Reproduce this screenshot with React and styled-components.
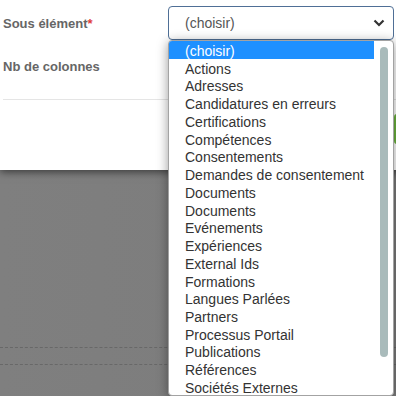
import React from "react";
import styled, { createGlobalStyle } from "styled-components";

const Global = createGlobalStyle`
  html, body { margin: 0; padding: 0; }
  body {
    overflow: hidden;
    background: #7d7d7d;
    font-family: "Liberation Sans", Arial, sans-serif;
  }
`;

const Page = styled.div`
  position: relative;
  width: 396px;
  height: 396px;
  overflow: hidden;
  background: linear-gradient(to right, #7f7f7f, #7b7b7b);
`;

const Modal = styled.div`
  width: calc(100% + 62px);
  background: #fff;
  box-shadow: 0 2px 8px rgba(0, 0, 0, 0.55);
  position: relative;
  z-index: 1;
`;

const Body = styled.div`
  padding: 6px 0 0 3px;
  display: flex;
  flex-direction: column;
  gap: 9px;
`;

const FieldRow = styled.div`
  display: flex;
  align-items: center;
  height: 34px;
`;

const Label = styled.label`
  width: 165px;
  flex: none;
  font-size: 13px;
  font-weight: bold;
  color: #666;
`;

const Required = styled.span`
  color: #e03b3b;
`;

const SelectBox = styled.div`
  box-sizing: border-box;
  width: 226px;
  height: 34px;
  border: 1px solid #4f6f96;
  border-radius: 4px;
  display: flex;
  align-items: center;
  justify-content: space-between;
  padding: 0 8px 0 16px;
  font-size: 14px;
  color: #555;
  background: #fff;
`;

const Divider = styled.hr`
  margin: 16px 0 0 3px;
  border: none;
  border-top: 1px solid #e5e5e5;
`;

const Footer = styled.div`
  display: flex;
  justify-content: flex-end;
  padding: 14px 0 26px;
`;

const GreenButton = styled.button`
  width: 64px;
  height: 30px;
  border: none;
  background: #6cb33e;
  border-radius: 3px;
`;

const Backdrop = styled.div`
  display: flex;
  flex-direction: column;
  gap: 16px;
  padding-top: 177px;
`;

const DashedLine = styled.div`
  border-top: 1px dashed #686868;
`;

const Dropdown = styled.div`
  position: absolute;
  left: 168px;
  top: 40px;
  width: 226px;
  height: 356px;
  box-sizing: border-box;
  border: 1px solid #a3a3a3;
  border-radius: 4px;
  background: #fff;
  box-shadow: 0 2px 12px rgba(0, 0, 0, 0.4);
  display: flex;
  overflow: hidden;
  z-index: 5;
`;

const OptionList = styled.ul`
  list-style: none;
  margin: 0;
  padding: 0;
  flex: 1;
`;

const Option = styled.li`
  box-sizing: border-box;
  height: 17.74px;
  padding: 4px 0 0 16px;
  line-height: 13.74px;
  font-size: 14px;
  white-space: nowrap;
  color: ${(p) => (p.$active ? "#fff" : "#333")};
  background: ${(p) => (p.$active ? "#1e90ff" : "transparent")};
`;

const ScrollTrack = styled.div`
  width: 19px;
  flex: none;
  display: flex;
  justify-content: center;
  padding-top: 6px;
`;

const ScrollThumb = styled.div`
  width: 8px;
  height: 310px;
  border-radius: 4px;
  background: #a9bbbb;
`;

const options = [
  "(choisir)",
  "Actions",
  "Adresses",
  "Candidatures en erreurs",
  "Certifications",
  "Compétences",
  "Consentements",
  "Demandes de consentement",
  "Documents",
  "Documents",
  "Evénements",
  "Expériences",
  "External Ids",
  "Formations",
  "Langues Parlées",
  "Partners",
  "Processus Portail",
  "Publications",
  "Références",
  "Sociétés Externes",
];

const Chevron = () => (
  <svg width="12" height="8" viewBox="0 0 12 8">
    <path d="M1.5 1.5 L6 6 L10.5 1.5" fill="none" stroke="#333" strokeWidth="2.2" />
  </svg>
);

export default function App() {
  return (
    <Page>
      <Global />
      <Modal>
        <Body>
          <FieldRow>
            <Label>
              Sous élément<Required>*</Required>
            </Label>
            <SelectBox>
              <span>(choisir)</span>
              <Chevron />
            </SelectBox>
          </FieldRow>
          <FieldRow>
            <Label>Nb de colonnes</Label>
          </FieldRow>
        </Body>
        <Divider />
        <Footer>
          <GreenButton />
        </Footer>
      </Modal>
      <Backdrop>
        <DashedLine />
        <DashedLine />
      </Backdrop>
      <Dropdown>
        <OptionList>
          {options.map((o, i) => (
            <Option key={i} $active={i === 0}>
              {o}
            </Option>
          ))}
        </OptionList>
        <ScrollTrack>
          <ScrollThumb />
        </ScrollTrack>
      </Dropdown>
    </Page>
  );
}
